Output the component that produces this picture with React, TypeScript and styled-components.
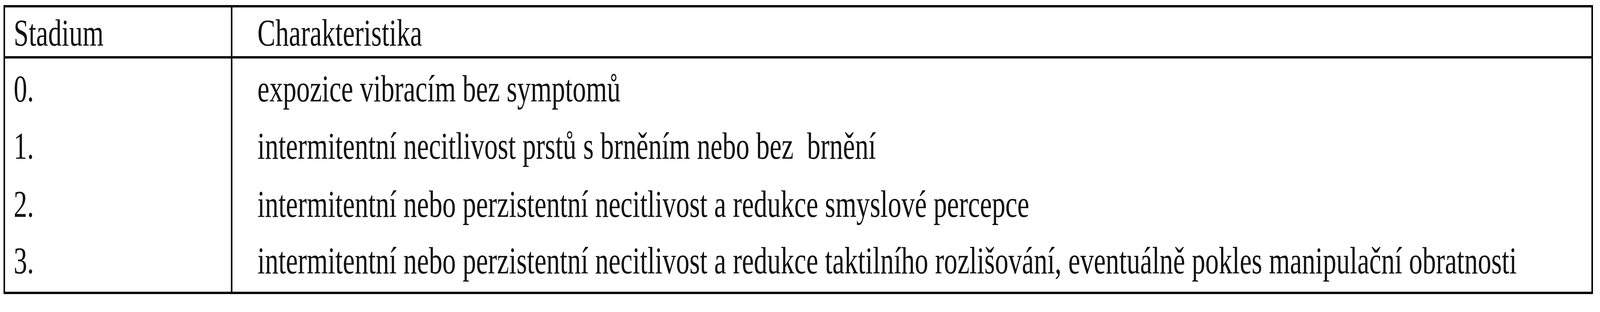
import React from 'react';
import styled, { createGlobalStyle } from 'styled-components';

const GlobalStyle = createGlobalStyle`
  html, body {
    margin: 0;
    padding: 0;
    background: #fff;
  }
`;

const Table = styled.div`
  box-sizing: border-box;
  width: 4069px;
  margin: 13px 0 0 9px;
  border-style: solid;
  border-color: #000;
  border-width: 6px 4px;
  font-family: "Liberation Serif", "Times New Roman", serif;
  font-size: 98px;
  line-height: 108px;
  color: #111;
`;

const Row = styled.div<{ $header?: boolean }>`
  display: grid;
  grid-template-columns: 582px minmax(0, 1fr);
  box-sizing: border-box;
  height: ${(p) => (p.$header ? '131px' : '149.5px')};
  border-bottom: ${(p) => (p.$header ? '6px solid #000' : 'none')};
`;

const Cell = styled.div<{ $first?: boolean; $top: number }>`
  box-sizing: border-box;
  overflow: hidden;
  padding-top: ${(p) => p.$top}px;
  padding-left: ${(p) => (p.$first ? '22px' : '64px')};
  border-right: ${(p) => (p.$first ? '4px solid #000' : 'none')};
`;

// the printed table uses a narrow serif face
const Text = styled.span`
  display: inline-block;
  white-space: pre;
  transform: scaleX(0.7043);
  transform-origin: 0 0;
`;

const rows = [
  { stage: '0.', top: 23, text: 'expozice vibracím bez symptomů' },
  { stage: '1.', top: 20, text: 'intermitentní necitlivost prstů s brněním nebo bez  brnění' },
  { stage: '2.', top: 20, text: 'intermitentní nebo perzistentní necitlivost a redukce smyslové percepce' },
  {
    stage: '3.',
    top: 15,
    text: 'intermitentní nebo perzistentní necitlivost a redukce taktilního rozlišování, eventuálně pokles manipulační obratnosti',
  },
];

const App: React.FC = () => {
  return (
    <>
      <GlobalStyle />
      <Table>
        <Row $header>
          <Cell $first $top={11}>
            <Text>Stadium</Text>
          </Cell>
          <Cell $top={11}>
            <Text>Charakteristika</Text>
          </Cell>
        </Row>
        {rows.map((r) => (
          <Row key={r.stage}>
            <Cell $first $top={r.top}>
              <Text>{r.stage}</Text>
            </Cell>
            <Cell $top={r.top}>
              <Text>{r.text}</Text>
            </Cell>
          </Row>
        ))}
      </Table>
    </>
  );
};

export default App;
